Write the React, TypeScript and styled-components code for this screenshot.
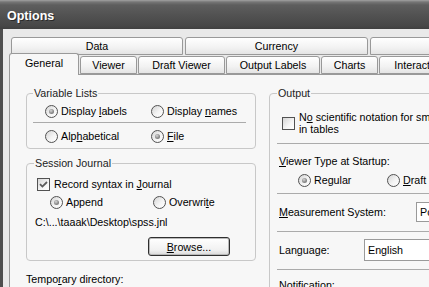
import React from 'react';
import styled, { createGlobalStyle } from 'styled-components';

const Global = createGlobalStyle`
  html, body { margin: 0; padding: 0; background: #e9e9e9; }
  body { font-family: "Liberation Sans", Arial, sans-serif; font-size: 10.7px; color: #000; }
`;

const Window = styled.div`
  width: 429px;
  height: 287px;
  overflow: hidden;
  display: flex;
  flex-direction: column;
  background: #e9e9e9;
`;

const TitleBar = styled.div`
  height: 29px;
  flex: none;
  display: flex;
  align-items: center;
  padding: 2px 0 0 7px;
  box-sizing: border-box;
  background: linear-gradient(#a2a2a2 0, #767676 2px, #5e5e5e 5px, #515151 16px, #474747 26px, #3f3f3f 29px);
  color: #fff;
  font: bold 12.5px "Liberation Sans", Arial, sans-serif;
  text-shadow: 1px 1px 0 #2a2a2a;
`;

const Frame = styled.div`
  flex: 1;
  border-left: 3px solid #4e4e4e;
  padding: 8px 0 0 6px;
  min-height: 0;
`;

const TabRow = styled.div<{ $front?: boolean }>`
  display: flex;
  align-items: flex-end;
  height: ${p => (p.$front ? 19 : 18)}px;
  padding-left: ${p => (p.$front ? 0 : 2)}px;
  gap: ${p => (p.$front ? 1 : 2)}px;
`;

const Tab = styled.div<{ $w: number; $active?: boolean }>`
  flex: none;
  width: ${p => p.$w}px;
  height: ${p => (p.$active ? 22 : 18)}px;
  margin-bottom: ${p => (p.$active ? -1 : 0)}px;
  box-sizing: border-box;
  border: 1px solid #999;
  border-bottom: ${p => (p.$active ? 'none' : '1px solid #999')};
  border-radius: 3px 3px 0 0;
  background: ${p =>
    p.$active ? '#f7f7f7' : 'linear-gradient(#ffffff, #f2f2f2 60%, #e4e4e4)'};
  display: flex;
  align-items: center;
  justify-content: center;
  padding-bottom: ${p => (p.$active ? 3 : 0)}px;
  white-space: nowrap;
  overflow: hidden;
  position: relative;
  z-index: ${p => (p.$active ? 2 : 0)};
`;

const Panel = styled.div`
  width: 600px;
  height: 300px;
  border: 1px solid #999;
  background: #f7f7f7;
  display: flex;
  gap: 13px;
  padding: 12px 0 0 16px;
  box-sizing: border-box;
  position: relative;
  z-index: 1;
`;

const LeftCol = styled.div`
  width: 230px;
  flex: none;
  display: flex;
  flex-direction: column;
`;

const RightCol = styled.div`
  width: 300px;
  flex: none;
`;

const Group = styled.fieldset<{ $pad: string; $top?: number }>`
  margin: ${p => p.$top ?? 0}px 0 0;
  min-width: 0;
  padding: ${p => p.$pad};
  border: 1px solid #c8c8c8;
  border-radius: 4px;
  display: flex;
  flex-direction: column;
`;

const Legend = styled.legend<{ $shift?: number }>`
  padding: 0 1px;
  margin-left: ${p => p.$shift ?? 0}px;
  line-height: 13px;
  color: #222;
`;

const ChoiceRow = styled.div<{ $indent: number; $col: number; $top?: number }>`
  display: grid;
  grid-template-columns: ${p => p.$col}px auto;
  align-items: center;
  height: 18px;
  padding-left: ${p => p.$indent}px;
  margin-top: ${p => p.$top ?? 0}px;
`;

const Choice = styled.label`
  display: flex;
  align-items: center;
  gap: 3px;
  white-space: nowrap;
`;

const Radio = styled.span<{ $on?: boolean }>`
  position: relative;
  flex: none;
  width: 13px;
  height: 13px;
  box-sizing: border-box;
  border-radius: 50%;
  border: 1px solid #525252;
  background: linear-gradient(135deg, #d4d4d4, #f4f4f4 55%, #ffffff);

  &::after {
    content: '';
    display: ${p => (p.$on ? 'block' : 'none')};
    position: absolute;
    left: 3px;
    top: 3px;
    width: 5px;
    height: 5px;
    border-radius: 50%;
    background: radial-gradient(circle at 40% 35%, #d6d6d6, #8a8a8a 55%, #6c6c6c);
  }
`;

const Box = styled.span`
  flex: none;
  width: 13px;
  height: 13px;
  box-sizing: border-box;
  border: 1px solid #525252;
  background: linear-gradient(135deg, #d6d6d6, #f6f6f6 60%, #ffffff);
  display: flex;
  align-items: center;
  justify-content: center;
`;

const Key = styled.span`
  text-decoration: underline;
  text-underline-offset: 1px;
`;

const Rule = styled.div<{ $top: number }>`
  height: 1px;
  background: #ababab;
  margin-top: ${p => p.$top}px;
`;

const CheckLine = styled.div<{ $indent: number; $top: number }>`
  display: flex;
  align-items: center;
  gap: 4px;
  padding-left: ${p => p.$indent}px;
  margin-top: ${p => p.$top}px;
  min-height: 18px;
  line-height: 12px;
  white-space: nowrap;
`;

const TextLine = styled.div<{ $top: number; $indent?: number }>`
  line-height: 16px;
  margin-top: ${p => p.$top}px;
  padding-left: ${p => p.$indent ?? 0}px;
  white-space: nowrap;
`;

const Button = styled.button`
  width: 82px;
  height: 19px;
  margin: 7px 0 0 113px;
  padding: 0;
  border: 1px solid #2f2f2f;
  border-radius: 3px;
  box-shadow: inset 0 0 0 1px #b9b9b9;
  background: linear-gradient(#ffffff, #f1f1f1 70%, #d9d9d9);
  font: inherit;
  color: #000;
`;

const FieldRow = styled.div<{ $label: number; $h: number }>`
  display: grid;
  grid-template-columns: ${p => p.$label}px 1fr;
  align-items: center;
  height: 22px;
  margin: 7px 0 8px;
  padding-left: 2px;
  white-space: nowrap;

  & > span:last-child {
    height: ${p => p.$h}px;
  }
`;

const Combo = styled.span`
  display: flex;
  align-items: center;
  box-sizing: border-box;
  border: 1px solid #9a9a9a;
  background: #fff;
  padding-left: 3px;
`;

const CheckMark = () => (
  <svg width="9" height="9" viewBox="0 0 9 9">
    <path d="M1 4.2 L3.4 6.6 L8 2" fill="none" stroke="#5c5c5c" strokeWidth="1.8" />
  </svg>
);

export default function App() {
  return (
    <Window>
      <Global />
      <TitleBar>Options</TitleBar>
      <Frame>
        <TabRow>
          <Tab $w={172}>Data</Tab>
          <Tab $w={183}>Currency</Tab>
          <Tab $w={90} />
        </TabRow>
        <TabRow $front>
          <Tab $w={70} $active>General</Tab>
          <Tab $w={57}>Viewer</Tab>
          <Tab $w={87}>Draft Viewer</Tab>
          <Tab $w={94}>Output Labels</Tab>
          <Tab $w={57}>Charts</Tab>
          <Tab $w={80}>Interactive</Tab>
        </TabRow>
        <Panel>
          <LeftCol>
            <Group $pad="2px 9px 3px 6px">
              <Legend>Variable Lists</Legend>
              <ChoiceRow $indent={12} $col={106}>
                <Choice><Radio $on /><span>Display <Key>l</Key>abels</span></Choice>
                <Choice><Radio /><span>Display <Key>n</Key>ames</span></Choice>
              </ChoiceRow>
              <Rule $top={2} />
              <ChoiceRow $indent={12} $col={106} $top={4}>
                <Choice><Radio /><span>Alp<Key>h</Key>abetical</span></Choice>
                <Choice><Radio $on /><span><Key>F</Key>ile</span></Choice>
              </ChoiceRow>
            </Group>
            <Group $pad="0 9px 4px 8px" $top={8}>
              <Legend $shift={-1}>Session Journal</Legend>
              <CheckLine $indent={2} $top={5}>
                <Box><CheckMark /></Box>
                <span>Record syntax in <Key>J</Key>ournal</span>
              </CheckLine>
              <ChoiceRow $indent={15} $col={103}>
                <Choice><Radio $on /><span>Append</span></Choice>
                <Choice><Radio /><span>Overwri<Key>t</Key>e</span></Choice>
              </ChoiceRow>
              <TextLine $top={3}>C:\...\taaak\Desktop\spss.jnl</TextLine>
              <Button><Key>B</Key>rowse...</Button>
            </Group>
            <TextLine $top={10}>Tempo<Key>r</Key>ary directory:</TextLine>
          </LeftCol>
          <RightCol>
            <Group $pad="0 0 20px 7px">
              <Legend>Output</Legend>
              <CheckLine $indent={5} $top={11}>
                <Box />
                <span>
                  N<Key>o</Key> scientific notation for small numbers
                  <br />
                  in tables
                </span>
              </CheckLine>
              <Rule $top={8} />
              <TextLine $top={9} $indent={2}><Key>V</Key>iewer Type at Startup:</TextLine>
              <ChoiceRow $indent={21} $col={89} $top={2}>
                <Choice><Radio $on /><span>Regular</span></Choice>
                <Choice><Radio /><span><Key>D</Key>raft</span></Choice>
              </ChoiceRow>
              <Rule $top={4} />
              <FieldRow $label={137} $h={20}>
                <span><Key>M</Key>easurement System:</span>
                <Combo>Points</Combo>
              </FieldRow>
              <Rule $top={0} />
              <FieldRow $label={85} $h={22}>
                <span>Lan<Key>g</Key>uage:</span>
                <Combo>English</Combo>
              </FieldRow>
              <Rule $top={0} />
              <TextLine $top={7} $indent={2}>Notification:</TextLine>
            </Group>
          </RightCol>
        </Panel>
      </Frame>
    </Window>
  );
}
